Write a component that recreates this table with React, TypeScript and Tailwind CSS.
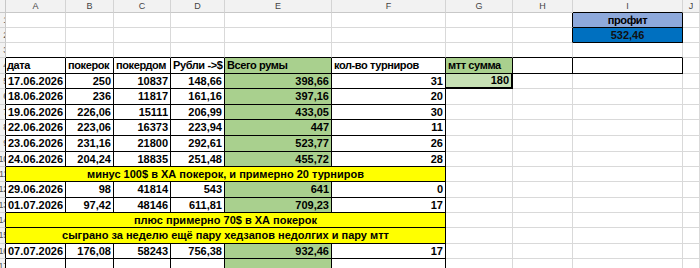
import type { ReactNode } from 'react';

const COLS = 'grid grid-cols-[6px_60px_48px_57px_54px_107px_114px_67px_60px_110px_1fr]';
const LETTERS = ['A', 'B', 'C', 'D', 'E', 'F', 'G', 'H', 'I', 'J'];

type DataRow = { n: number; h: string; d: string[]; g?: string };
type NoteRow = { n: number; h: string; note: string };

const ROWS: (DataRow | NoteRow)[] = [
  { n: 5, h: 'h-[15px]', d: ['17.06.2026', '250', '10837', '148,66', '398,66', '31'], g: '180' },
  { n: 6, h: 'h-[16px]', d: ['18.06.2026', '236', '11817', '161,16', '397,16', '20'] },
  { n: 7, h: 'h-[15px]', d: ['19.06.2026', '226,06', '15111', '206,99', '433,05', '30'] },
  { n: 8, h: 'h-[16px]', d: ['22.06.2026', '223,06', '16373', '223,94', '447', '11'] },
  { n: 9, h: 'h-[16px]', d: ['23.06.2026', '231,16', '21800', '292,61', '523,77', '26'] },
  { n: 10, h: 'h-[15px]', d: ['24.06.2026', '204,24', '18835', '251,48', '455,72', '28'] },
  { n: 11, h: 'h-[15px]', note: 'минус 100$ в ХА покерок, и примерно 20 турниров' },
  { n: 12, h: 'h-[16px]', d: ['29.06.2026', '98', '41814', '543', '641', '0'] },
  { n: 13, h: 'h-[15px]', d: ['01.07.2026', '97,42', '48146', '611,81', '709,23', '17'] },
  { n: 14, h: 'h-[15px]', note: 'плюс примерно 70$ в ХА покерок' },
  { n: 15, h: 'h-[16px]', note: 'сыграно за неделю ещё пару хедзапов недолгих и пару мтт' },
  { n: 16, h: 'h-[15px]', d: ['07.07.2026', '176,08', '58243', '756,38', '932,46', '17'] },
  { n: 17, h: 'h-[16px]', d: ['', '', '', '', '', ''] },
];

function Cell({ children, cls = '' }: { children?: ReactNode; cls?: string }) {
  return (
    <div className={`border-r border-b flex items-center overflow-hidden whitespace-nowrap ${cls}`}>
      {children}
    </div>
  );
}

function RowNum({ n, dark }: { n: number; dark?: boolean }) {
  return (
    <Cell cls={`bg-[#f2f2f2] justify-end text-[9px] font-normal text-[#555] -tracking-[0.2px] border-b-[#d4d4d4] ${dark ? 'border-r-black' : 'border-r-[#c8c8c8]'}`}>
      <span className="-mr-[3px]">{n}</span>
    </Cell>
  );
}

const GRID = 'border-r-[#d9d9d9] border-b-[#d9d9d9]';
const DARK = 'border-r-black border-b-black';
const TXT = 'tracking-[-0.4px]';

export default function App() {
  return (
    <div className="w-[700px] h-[268px] overflow-hidden bg-white text-black font-bold text-[11px] leading-none [font-family:'Liberation_Sans',Arial,sans-serif]">
      {/* column letters */}
      <div className={`${COLS} h-[13px] bg-[#f2f2f2]`}>
        <Cell cls="border-r-[#c8c8c8] border-b-[#c8c8c8]" />
        {LETTERS.map((l) => (
          <Cell key={l} cls={`justify-center text-[9px] font-normal text-[#444] border-r-[#d4d4d4] ${l === 'I' ? 'border-b-black' : 'border-b-[#c8c8c8]'}`}>
            {l}
          </Cell>
        ))}
      </div>

      {/* rows 1-3 */}
      {[1, 2, 3].map((n) => (
        <div key={n} className={`${COLS} h-[15px]`}>
          <RowNum n={n} />
          {LETTERS.map((l) => {
            if (l === 'I' && n === 1)
              return <Cell key={l} cls={`${DARK} bg-[#8ea9db] justify-center ${TXT}`}>профит</Cell>;
            if (l === 'I' && n === 2)
              return <Cell key={l} cls={`${DARK} bg-[#0070c0] justify-center text-[#111]`}>532,46</Cell>;
            if (l === 'H' && n < 3) return <Cell key={l} cls="border-r-black border-b-[#d9d9d9]" />;
            if (n === 3 && l !== 'J') return <Cell key={l} cls="border-r-[#d9d9d9] border-b-black" />;
            return <Cell key={l} cls={GRID} />;
          })}
        </div>
      ))}

      {/* row 4: table header */}
      <div className={`${COLS} h-[16px]`}>
        <RowNum n={4} dark />
        <Cell cls={`${DARK} pl-[1px] ${TXT}`}>дата</Cell>
        <Cell cls={`${DARK} pl-[2px] ${TXT}`}>покерок</Cell>
        <Cell cls={`${DARK} pl-[2px] ${TXT}`}>покердом</Cell>
        <Cell cls={`${DARK} pl-[2px] ${TXT}`}>Рубли -&gt;$</Cell>
        <Cell cls={`${DARK} bg-[#a9d08e] pl-[2px] ${TXT}`}>Всего румы</Cell>
        <Cell cls={`${DARK} pl-[2px] ${TXT}`}>кол-во турниров</Cell>
        <Cell cls={`${DARK} bg-[#a9d08e] pl-[2px] ${TXT}`}>мтт сумма</Cell>
        <Cell cls={DARK} />
        <Cell cls={DARK} />
        <Cell cls={GRID} />
      </div>

      {ROWS.map((r) => (
        <div key={r.n} className={`${COLS} ${r.h}`}>
          <RowNum n={r.n} dark />
          {'note' in r ? (
            <Cell cls={`col-span-6 ${DARK} bg-[#ffff00] justify-center`}>{r.note}</Cell>
          ) : (
            r.d.map((v, i) => (
              <Cell
                key={i}
                cls={`${DARK} ${i === 0 ? 'justify-center' : 'justify-end pr-[2px]'} ${i === 4 ? 'bg-[#a9d08e]' : ''}`}
              >
                {v}
              </Cell>
            ))
          )}
          {'note' in r || !r.g ? (
            <Cell cls={GRID} />
          ) : (
            <Cell cls="border-r-2 border-b-2 border-r-black border-b-black bg-[#c6e0b4] justify-end pr-[2px]">{r.g}</Cell>
          )}
          <Cell cls={GRID} />
          <Cell cls={GRID} />
          <Cell cls={GRID} />
        </div>
      ))}
    </div>
  );
}
